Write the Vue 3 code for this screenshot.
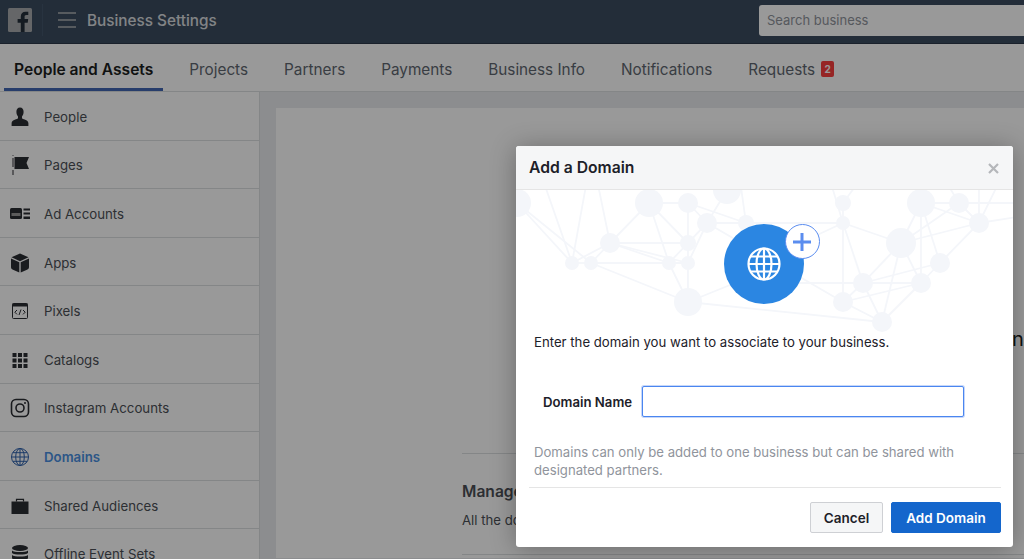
<template>
  <div class="page">
    <header class="topbar">
      <div class="fb-logo">
        <svg width="24" height="24" viewBox="0 0 24 24">
          <rect width="24" height="24" rx="1.5" fill="#a9abae" />
          <path d="M16.6 24v-9.3h3.1l.5-3.6h-3.6V8.800c0-1 .3-1.800 1.800-1.800h1.900V3.800c-.3 0-1.500-.1-2.800-.1-2.800 0-4.700 1.700-4.700 4.800v2.600H9.600v3.600h3.200V24z" fill="#232d39" />
        </svg>
      </div>
      <span class="logo-divider"></span>
      <svg class="menu-icon" width="18" height="16" viewBox="0 0 18 16">
        <path d="M0 1h18M0 8h18M0 15h18" stroke="#b0b2b5" stroke-width="1.600" />
      </svg>
      <span class="app-title">Business Settings</span>
      <div class="search">Search business</div>
    </header>

    <nav class="tabs">
      <a
        v-for="tab in tabs"
        :key="tab.label"
        class="tab"
        :class="{ active: tab.active }"
      >
        {{ tab.label }}
        <span v-if="tab.badge" class="badge">{{ tab.badge }}</span>
      </a>
    </nav>

    <div class="main">
      <aside class="sidebar">
        <div
          v-for="item in sideItems"
          :key="item.label"
          class="side-row"
          :class="{ current: item.current }"
        >
          <span class="side-icon">
            <svg width="20" height="20" viewBox="0 0 20 20" v-html="item.icon"></svg>
          </span>
          {{ item.label }}
        </div>
      </aside>

      <section class="content">
        <div class="card">
          <p class="behind-text">na</p>
          <div class="manage">
            <h3>Manage Your Domains</h3>
            <p>All the domains owned by this business are listed here.</p>
          </div>
        </div>
      </section>
    </div>

    <div class="overlay"></div>

    <div class="modal">
      <div class="modal-head">
        <span>Add a Domain</span>
        <svg class="close" width="11" height="11" viewBox="0 0 11 11">
          <path d="M1 1l9 9M10 1l-9 9" stroke="#b5b7ba" stroke-width="2.200" />
        </svg>
      </div>

      <div class="art">
        <svg class="network" width="497" height="145" viewBox="516 190 497 145">
          <g stroke="#f4f6fa" stroke-width="1.800">
            <line v-for="(l, i) in links" :key="i" :x1="nodes[l[0]][0]" :y1="nodes[l[0]][1]" :x2="nodes[l[1]][0]" :y2="nodes[l[1]][1]" />
          </g>
          <g fill="#f4f6fa">
            <circle v-for="(n, i) in nodes" :key="i" :cx="n[0]" :cy="n[1]" :r="n[2]" />
          </g>
        </svg>
        <div class="globe">
          <svg width="34" height="34" viewBox="0 0 34 34" fill="none" stroke="#fff" stroke-width="2.200">
            <circle cx="17" cy="17" r="15.500" />
            <ellipse cx="17" cy="17" rx="7.500" ry="15.500" />
            <path d="M17 1.500v31M1.500 17h31M3.500 9.500h27M3.500 24.500h27" />
          </svg>
          <div class="plus">
            <svg width="18" height="18" viewBox="0 0 18 18">
              <path d="M9 0v18M0 9h18" stroke="#5b8def" stroke-width="3" />
            </svg>
          </div>
        </div>
      </div>

      <div class="modal-body">
        <p class="lead">Enter the domain you want to associate to your business.</p>
        <div class="field">
          <label>Domain Name</label>
          <div class="input"></div>
        </div>
        <p class="hint">Domains can only be added to one business but can be shared with designated partners.</p>
      </div>

      <div class="modal-foot">
        <button class="btn cancel">Cancel</button>
        <button class="btn primary">Add Domain</button>
      </div>
    </div>
  </div>
</template>

<script setup>
const tabs = [
  { label: 'People and Assets', active: true },
  { label: 'Projects' },
  { label: 'Partners' },
  { label: 'Payments' },
  { label: 'Business Info' },
  { label: 'Notifications' },
  { label: 'Requests', badge: 2 },
]

// 图标都是 20x20 的内联 svg
const sideItems = [
  { label: 'People', icon: '<path fill="#2b2d33" d="M10 .5c2.300 0 3.600 1.800 3.600 4.300 0 1.900-.7 3.700-1.600 4.600v1.800c0 .9 6.400 1.400 6.400 5v2.800H1.600v-2.800c0-3.600 6.400-4.100 6.400-5V9.400c-.9-.9-1.600-2.700-1.600-4.600C6.400 2.300 7.700.5 10 .5z"/>' },
  { label: 'Pages', icon: '<path fill="#2b2d33" d="M2.500 0h1v.8h-1zM2.500 3h1v9h-1zM2.500 15h1v5h-1z"/><path fill="#2b2d33" d="M4.500 2h14.500l-2.500 6 2.500 6H4.500z"/>' },
  { label: 'Ad Accounts', icon: '<rect x="0" y="4" width="12" height="11" rx="1.500" fill="#2b2d33"/><rect x="1.500" y="9" width="9" height="3" fill="#999"/><path fill="#2b2d33" d="M13.500 4.500H20v2h-6.500zM13.500 8.500H20v2h-6.500zM13.500 12.500H20v2.500h-6.500z"/>' },
  { label: 'Apps', icon: '<path fill="#2b2d33" d="M10 .5l8.500 3.800-8.500 3.900-8.500-3.900z"/><path fill="#2b2d33" d="M1 5.500l8.300 3.800v10.200L3 16.700c-1.300-.6-2-1.500-2-2.800zM19 5.500l-8.300 3.800v10.200l6.300-2.800c1.300-.6 2-1.500 2-2.800z"/>' },
  { label: 'Pixels', icon: '<rect x="2.500" y="2.500" width="15" height="15" rx="1" fill="none" stroke="#2b2d33" stroke-width="1"/><rect x="2.500" y="2.500" width="15" height="3" fill="#2b2d33"/><path d="M7 9l-2.200 2.200L7 13.400M13 9l2.200 2.200L13 13.400M11 8.500l-2 5.500" fill="none" stroke="#2b2d33" stroke-width="1"/>' },
  { label: 'Catalogs', icon: '<path fill="#2b2d33" d="M2.500 3h4v4h-4zM8 3h4v4H8zM13.500 3h4v4h-4zM2.500 8.500h4v4h-4zM8 8.500h4v4H8zM13.500 8.500h4v4h-4zM2.500 14h4v4h-4zM8 14h4v4H8zM13.500 14h4v4h-4z"/>' },
  { label: 'Instagram Accounts', icon: '<rect x="1.500" y="1.500" width="17" height="17" rx="4.500" fill="none" stroke="#2b2d33" stroke-width="1.600"/><circle cx="10" cy="10" r="4" fill="none" stroke="#2b2d33" stroke-width="1.600"/><circle cx="15" cy="5" r="1" fill="#2b2d33"/>' },
  { label: 'Domains', current: true, icon: '<g fill="none" stroke="#2f62ad" stroke-width="1"><circle cx="10" cy="10" r="8.500"/><ellipse cx="10" cy="10" rx="4.300" ry="8.500"/><path d="M10 1.500v17M1.500 10h17M2.800 5.700h14.400M2.800 14.300h14.400"/></g>' },
  { label: 'Shared Audiences', icon: '<path fill="#2b2d33" d="M1.500 5.500h17v12.500h-17z"/><path fill="none" stroke="#2b2d33" stroke-width="1.200" d="M6.500 5.500V3.400h7v2.100"/>' },
  { label: 'Offline Event Sets', icon: '<ellipse cx="10" cy="4" rx="8" ry="3" fill="#2b2d33"/><path fill="#2b2d33" d="M2 6.500c2 2 14 2 16 0v2.500c-2 2-14 2-16 0zM2 11c2 2 14 2 16 0v3c0 3-16 3-16 0z"/>' },
]

// 背景网络图的节点 [x, y, r]，直接用截图里的坐标；r 为 0 的点在可视区外或被遮住，只用来连线
const nodes = [
  [517, 203, 14], [649, 203, 14], [688, 203, 10], [727, 190, 14], [707, 223, 10], [746, 223, 8],
  [610, 243, 10], [688, 243, 8], [572, 263, 7], [591, 263, 7], [669, 263, 7], [688, 263, 7],
  [688, 302, 14], [843, 223, 7], [843, 203, 8], [921, 203, 14], [959, 203, 10], [979, 223, 10],
  [901, 243, 15], [940, 263, 10], [863, 283, 10], [921, 283, 10], [843, 302, 10], [882, 322, 10],
  [543, 180, 0], [587, 180, 0], [597, 180, 0], [979, 180, 0], [1000, 180, 0], [1030, 215, 0],
  [1030, 203, 0], [830, 180, 0], [860, 180, 0], [735, 283, 0], [800, 243, 0], [740, 180, 0], [945, 180, 0],
]

const links = [
  [0, 8], [0, 9], [24, 8], [25, 8], [26, 6], [6, 8], [6, 9], [6, 1], [6, 7], [6, 10], [6, 11],
  [1, 2], [1, 10], [1, 7], [2, 4], [2, 12], [2, 5], [3, 4], [35, 5], [4, 5], [4, 10], [4, 11], [4, 7],
  [8, 9], [9, 11], [9, 12], [10, 12], [11, 12], [12, 23], [12, 33], [4, 22], [33, 20], [5, 13],
  [34, 13], [13, 14], [31, 13], [32, 14], [13, 18], [13, 22], [13, 20], [20, 18], [20, 21], [20, 19],
  [22, 20], [22, 21], [22, 23], [20, 23], [18, 23], [21, 23], [18, 21], [15, 18], [15, 21], [15, 19],
  [15, 16], [15, 17], [16, 17], [16, 18], [17, 18], [17, 19], [27, 17], [28, 17], [36, 16], [17, 29],
  [15, 30], [19, 21],
]
</script>

<style>
html,
body {
  margin: 0;
  background: #fff;
}
</style>

<style scoped>
.page {
  position: relative;
  width: 1024px;
  height: 559px;
  overflow: hidden;
  display: flex;
  flex-direction: column;
  font-family: Inter, "Liberation Sans", sans-serif;
  color: #4b4f56;
  background: #e9ebee;
}

.topbar {
  flex: none;
  height: 44px;
  box-sizing: border-box;
  display: flex;
  align-items: center;
  padding: 0 0 3px 8px;
  background: #3b4b5f;
  border-bottom: 1px solid #2c3848;
}

.fb-logo {
  height: 24px;
}

.logo-divider {
  width: 1px;
  height: 32px;
  margin: 0 15px 0 10px;
  background: #44566c;
}

.app-title {
  margin-left: 11px;
  font-size: 15.300px;
  font-weight: 500;
  color: #f5f6f7;
  opacity: 0.85;
}

.search {
  margin-left: auto;
  width: 265px;
  height: 31px;
  padding-left: 8px;
  box-sizing: border-box;
  line-height: 31px;
  font-size: 13px;
  color: #90949c;
  background: #fff;
  border-radius: 3px 0 0 3px;
}

.tabs {
  flex: none;
  height: 48px;
  box-sizing: border-box;
  display: flex;
  gap: 16px;
  padding-left: 4px;
  background: #fff;
  border-bottom: 1px solid #dddfe2;
}

.tab {
  display: flex;
  align-items: center;
  height: 47px;
  box-sizing: border-box;
  padding: 6px 10px 0;
  font-size: 15.300px;
  color: #606770;
  white-space: nowrap;
  border-bottom: 3px solid transparent;
}

.tab.active {
  font-weight: 600;
  font-size: 15.600px;
  color: #1c1e21;
  border-bottom-color: #4267b2;
}

.badge {
  margin-left: 6px;
  width: 13px;
  height: 16px;
  border-radius: 2px;
  background: #fa3e3e;
  color: #fff;
  font-size: 10px;
  font-weight: 700;
  line-height: 16px;
  text-align: center;
}

.main {
  flex: 1;
  display: flex;
  min-height: 0;
}

.sidebar {
  flex: none;
  width: 260px;
  box-sizing: border-box;
  background: #fff;
  border-right: 1px solid #dddfe2;
}

.side-row {
  height: 48.600px;
  box-sizing: border-box;
  display: flex;
  align-items: center;
  padding: 2px 0 0 10px;
  font-size: 13.250px;
  color: #4b4f56;
  border-bottom: 1px solid #dddfe2;
}

.side-row.current {
  font-weight: 600;
  color: #4a90e2;
}

.side-icon {
  width: 34px;
  height: 20px;
}

.content {
  flex: 1;
  padding: 15px 0 0 15px;
  min-width: 0;
}

.card {
  height: 100%;
  margin-right: -10px;
  background: #fff;
  overflow: hidden;
  border: 1px solid #e9ebee;
  box-sizing: border-box;
  padding-top: 219px;
  padding-left: 186px;
}

.behind-text {
  margin: 0;
  font-size: 20px;
  line-height: 24px;
  padding-left: 550px;
  white-space: nowrap;
  color: #1c1e21;
}

.manage {
  margin-top: 102px;
  padding-top: 28px;
  border-top: 1px solid #dddfe2;
}

.manage h3 {
  margin: 0 0 10px;
  font-size: 15.600px;
  font-weight: 600;
  color: #4b4f56;
  line-height: 20px;
}

.manage p {
  margin: 0;
  font-size: 13.200px;
  line-height: 16px;
  padding-bottom: 26px;
  border-bottom: 1px solid #dddfe2;
}

.overlay {
  position: absolute;
  inset: 0;
  background: rgba(0, 0, 0, 0.4);
}

.modal {
  position: absolute;
  left: 516px;
  top: 146px;
  width: 497px;
  height: 401px;
  display: flex;
  flex-direction: column;
  background: #fff;
  border-radius: 3px;
  box-shadow: 0 2px 26px rgba(0, 0, 0, 0.3);
  overflow: hidden;
}

.modal-head {
  flex: none;
  height: 44px;
  box-sizing: border-box;
  display: flex;
  align-items: center;
  justify-content: space-between;
  padding: 0 14px 0 13px;
  background: #f5f6f7;
  border-bottom: 1px solid #e5e5e5;
  font-size: 15.700px;
  font-weight: 600;
  color: #1d2129;
}

.close {
  margin-top: 2px;
}

.art {
  position: relative;
  flex: none;
  height: 144px;
  overflow: hidden;
}

.network {
  position: absolute;
  left: 0;
  top: 0;
}

.globe {
  position: absolute;
  left: 208px;
  top: 34px;
  width: 80px;
  height: 80px;
  border-radius: 50%;
  background: #2b86e2;
  display: flex;
  align-items: center;
  justify-content: center;
}

.plus {
  position: absolute;
  left: 60.500px;
  top: 0;
  width: 35px;
  height: 35px;
  box-sizing: border-box;
  border: 1px solid #5b8def;
  border-radius: 50%;
  background: #fff;
  display: flex;
  align-items: center;
  justify-content: center;
}

.modal-body {
  flex: 1;
  padding: 0 18px;
}

.lead {
  margin: 0;
  font-size: 13.200px;
  line-height: 16px;
  color: #1d2129;
}

.field {
  display: flex;
  align-items: center;
  gap: 10px;
  margin-top: 36px;
  padding-left: 9px;
}

.field label {
  font-size: 13.200px;
  font-weight: 600;
  color: #1d2129;
  white-space: nowrap;
}

.input {
  width: 322px;
  height: 31px;
  box-sizing: border-box;
  border: 1px solid #4a86f0;
  border-radius: 2px;
  background: #fff;
  box-shadow: 0 0 0 1px rgba(91, 141, 239, 0.35);
}

.hint {
  margin: 26px 0 0;
  font-size: 13.150px;
  line-height: 18px;
  color: #90949c;
}

.modal-foot {
  flex: none;
  display: flex;
  justify-content: flex-end;
  gap: 8px;
  margin: 0 12px 0 13px;
  padding: 14px 0;
  border-top: 1px solid #e5e5e5;
}

.btn {
  height: 31px;
  box-sizing: border-box;
  border-radius: 2px;
  font-family: inherit;
  font-size: 13.500px;
  font-weight: 600;
  padding: 0;
}

.cancel {
  width: 73px;
  background: #f5f6f7;
  border: 1px solid #ced0d4;
  color: #1d2129;
}

.primary {
  width: 110px;
  background: #1466cc;
  border: 1px solid #1466cc;
  color: #fff;
}
</style>
